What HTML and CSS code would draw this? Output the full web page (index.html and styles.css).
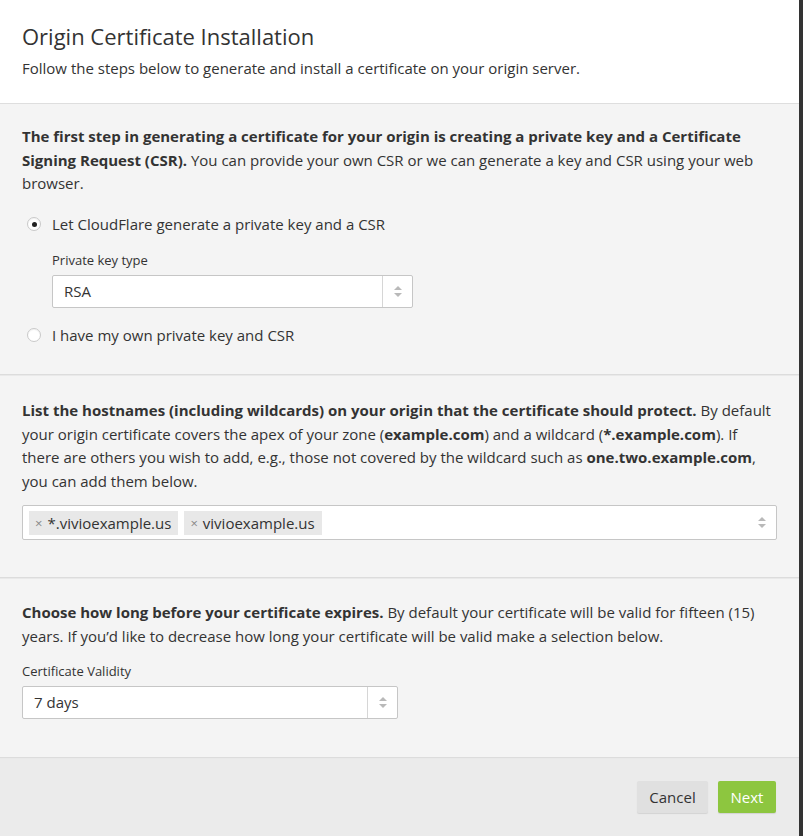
FILE: index.html
```html
<!DOCTYPE html>
<html>
<head>
<meta charset="utf-8">
<link rel="stylesheet" href="styles.css">
</head>
<body>
<div class="modal">
  <header class="modal-header">
    <h1 class="title">Origin Certificate Installation</h1>
    <p class="subtitle">Follow the steps below to generate and install a certificate on your origin server.</p>
  </header>

  <section class="section s1">
    <p class="text"><strong>The first step in generating a certificate for your origin is creating a private key and a Certificate Signing Request (CSR).</strong> You can provide your own CSR or we can generate a key and CSR using your web browser.</p>
    <div class="radio-row r1">
      <span class="radio checked"></span>
      <span class="radio-label">Let CloudFlare generate a private key and a CSR</span>
    </div>
    <div class="sub">
      <div class="field-label fl1">Private key type</div>
      <div class="select key-select">
        <span class="select-value">RSA</span>
        <span class="select-arrows"><span class="up"></span><span class="down"></span></span>
      </div>
    </div>
    <div class="radio-row r2">
      <span class="radio"></span>
      <span class="radio-label">I have my own private key and CSR</span>
    </div>
  </section>

  <section class="section s2">
    <p class="text"><strong>List the hostnames (including wildcards) on your origin that the certificate should protect.</strong> By default your origin certificate covers the apex of your zone (<strong>example.com</strong>) and a wildcard (<strong>*.example.com</strong>). If there are others you wish to add, e.g., those not covered by the wildcard such as <strong>one.two.example.com</strong>, you can add them below.</p>
    <div class="tag-input">
      <span class="tag"><span class="tag-x">×</span>*.vivioexample.us</span>
      <span class="tag"><span class="tag-x">×</span>vivioexample.us</span>
      <span class="tag-arrows"><span class="up"></span><span class="down"></span></span>
    </div>
  </section>

  <section class="section s3">
    <p class="text"><strong>Choose how long before your certificate expires.</strong> By default your certificate will be valid for fifteen (15) years. If you’d like to decrease how long your certificate will be valid make a selection below.</p>
    <div class="field-label fl3">Certificate Validity</div>
    <div class="select validity-select">
      <span class="select-value">7 days</span>
      <span class="select-arrows"><span class="up"></span><span class="down"></span></span>
    </div>
  </section>

  <footer class="modal-footer">
    <button class="btn btn-cancel">Cancel</button>
    <button class="btn btn-next">Next</button>
  </footer>
</div>
</body>
</html>
```

FILE: styles.css
```css
* { box-sizing: border-box; }
html, body {
  margin: 0;
  padding: 0;
  background: #333333;
  height: 836px;
  overflow: hidden;
}
body {
  font-family: "Open Sans", "DejaVu Sans", sans-serif;
  color: #333;
  font-size: 15px;
}
.modal {
  width: 799px;
  height: 836px;
  background: #f4f4f4;
  display: flex;
  flex-direction: column;
}
.modal-header {
  background: #fff;
  padding: 21px 22px 22px;
  border-bottom: 1px solid #dedede;
  height: 104px;
}
.title {
  margin: 0;
  font-size: 22px;
  font-weight: 400;
  line-height: 30px;
  color: #333;
}
.subtitle {
  margin: 6px 0 0;
  font-size: 15px;
  line-height: 23px;
  color: #333;
}
.section {
  padding: 0 22px;
  border-bottom: 1px solid #dcdcdc;
  box-shadow: 0 1px 0 #e9e9e9;
  margin-bottom: 1px;
}
.text {
  margin: 0;
  line-height: 23.5px;
  font-size: 15px;
}
.text strong { font-weight: 700; }
.s1 { padding-top: 21px; height: 271px; }
.radio-row {
  display: flex;
  align-items: center;
  height: 24px;
  padding-left: 5px;
}
.r1 { margin-top: 16.5px; }
.r2 { margin-top: 15px; }
.radio {
  width: 14px;
  height: 14px;
  border-radius: 50%;
  border: 1px solid #c9c9c9;
  background: #fff;
  box-shadow: inset 0 1px 1px rgba(0,0,0,0.06);
  position: relative;
  margin-right: 11px;
  flex: none;
}
.radio.checked::after {
  content: "";
  position: absolute;
  left: 3.5px;
  top: 3.5px;
  width: 5px;
  height: 5px;
  border-radius: 50%;
  background: #222;
}
.radio-label { font-size: 15px; line-height: 24px; }
.sub { padding-left: 30px; }
.field-label {
  font-size: 13px;
  line-height: 20px;
  color: #333;
}
.fl1 { margin-top: 14px; }
.select {
  margin-top: 5px;
  height: 33px;
  background: #fff;
  border: 1px solid #c6c6c6;
  border-radius: 2px;
  display: flex;
  align-items: stretch;
}
.key-select { width: 361px; }
.validity-select { width: 376px; }
.select-value {
  flex: 1;
  padding-left: 11px;
  line-height: 31px;
  font-size: 15px;
}
.select-arrows, .tag-arrows {
  width: 30px;
  display: flex;
  flex-direction: column;
  align-items: center;
  justify-content: center;
  gap: 3px;
}
.select-arrows { border-left: 1px solid #d6d6d6; }
.up, .down {
  width: 0;
  height: 0;
  border-left: 4px solid transparent;
  border-right: 4px solid transparent;
}
.up { border-bottom: 4px solid #b9b9b9; }
.down { border-top: 4px solid #b9b9b9; }
.s2 { padding-top: 23px; height: 202px; }
.tag-input {
  margin-top: 12px;
  height: 35px;
  background: #fff;
  border: 1px solid #c6c6c6;
  border-radius: 2px;
  display: flex;
  align-items: center;
  padding-left: 6px;
  gap: 6px;
}
.tag {
  background: #e8e8e8;
  height: 24px;
  line-height: 24px;
  padding: 0 7px 0 6px;
  font-size: 15px;
  color: #333;
  display: flex;
  align-items: center;
}
.tag-x {
  color: #888;
  font-size: 13px;
  margin-right: 5px;
}
.tag-arrows { margin-left: auto; width: 28px; }
.s3 { padding-top: 22px; height: 179px; }
.fl3 { margin-top: 13px; }
.modal-footer {
  flex: 1;
  background: #ebebeb;
  display: flex;
  justify-content: flex-end;
  align-items: flex-start;
  gap: 10px;
  padding: 22px 23px 0 0;
}
.btn {
  font-family: "Open Sans", "DejaVu Sans", sans-serif;
  font-size: 15px;
  height: 32px;
  border: none;
  border-radius: 2px;
  padding: 0;
  cursor: pointer;
}
.btn-cancel {
  width: 71px;
  background: #e0e0e0;
  color: #333;
  box-shadow: 0 1px 1px rgba(0,0,0,0.1);
}
.btn-next {
  width: 58px;
  background: #8dc63f;
  color: #fff;
  box-shadow: 0 1px 1px rgba(0,0,0,0.1);
}
```
